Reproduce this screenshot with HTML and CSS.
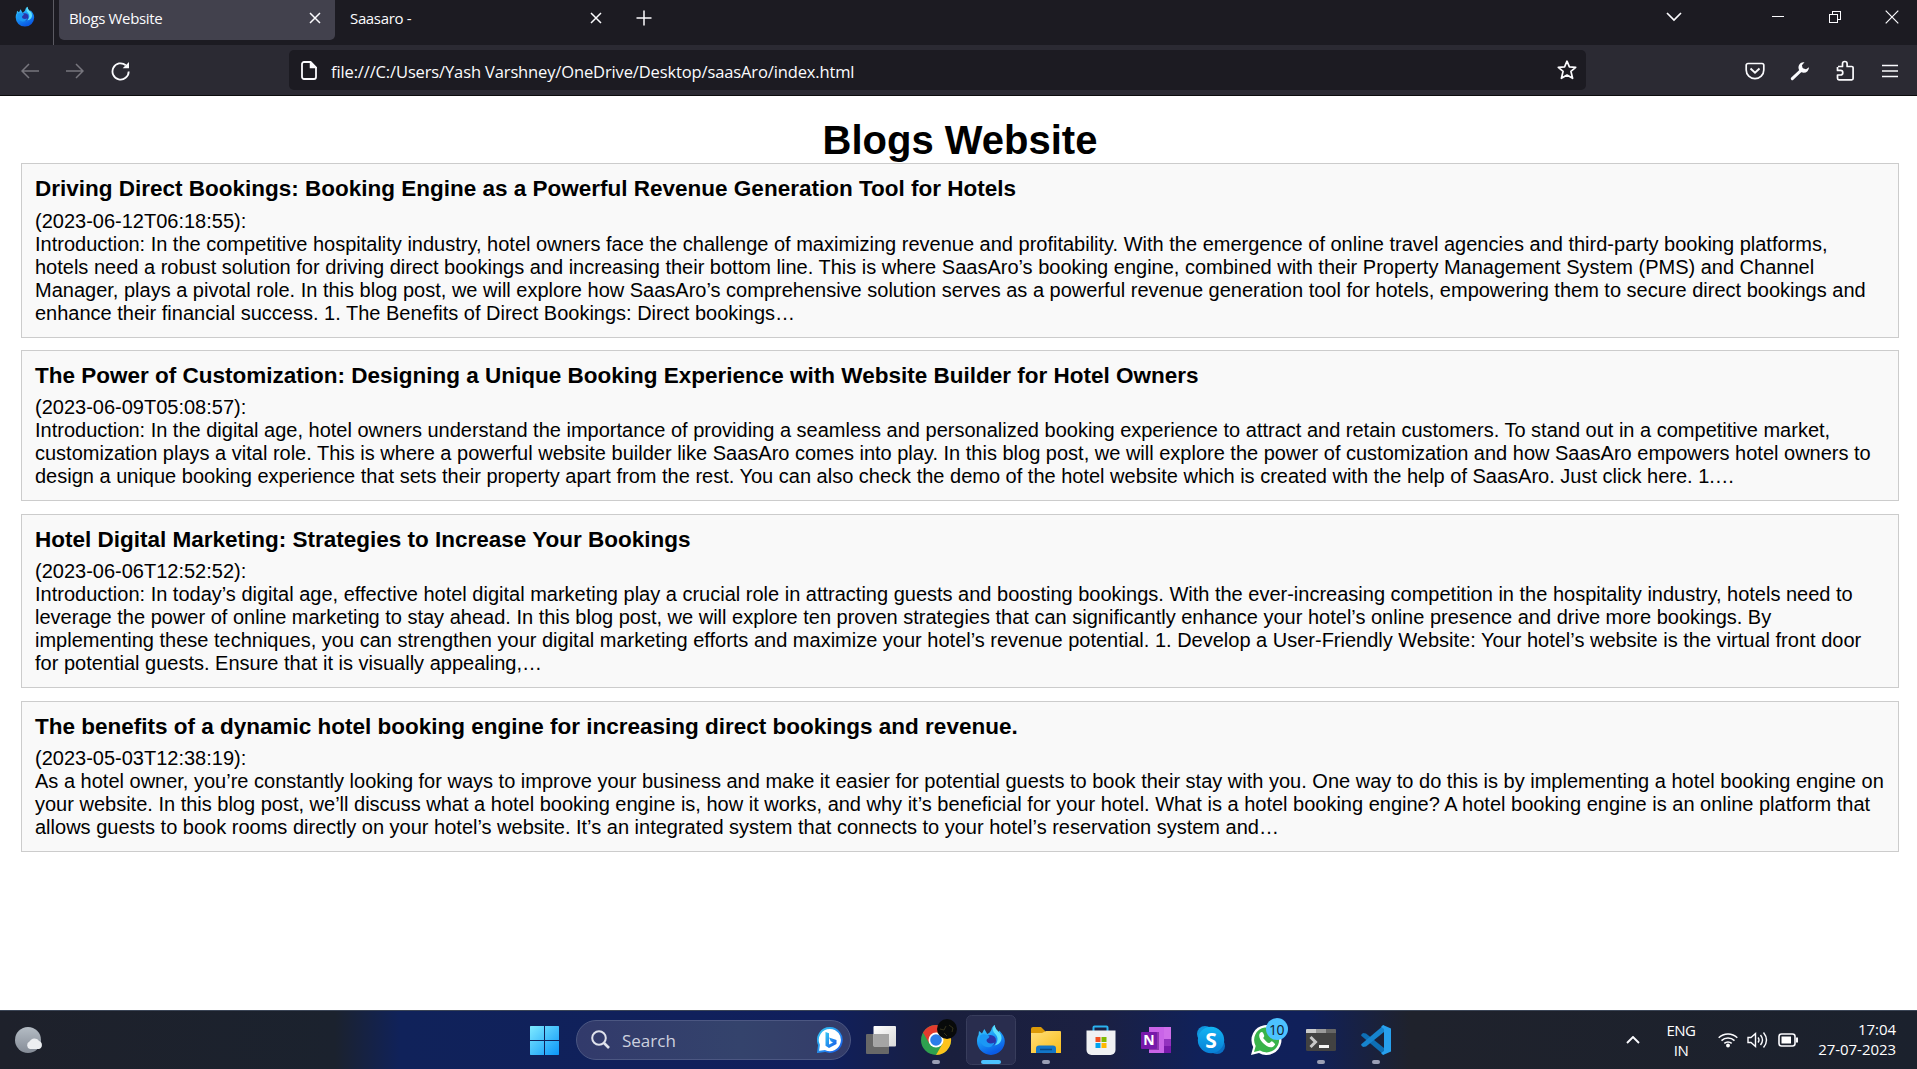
FILE: index.html
```html
<!DOCTYPE html>
<html lang="en">
<head>
<meta charset="utf-8">
<title>Blogs Website</title>
<link rel="stylesheet" href="styles.css">
</head>
<body>
<div class="screen">
  <header class="tabbar">
    <div class="view-btn">
      <svg width="20" height="26" viewBox="10 6 30 39"><use href="#fox"/></svg>
    </div>
    <div class="tab tab-active"><span>Blogs Website</span>
      <svg class="line" width="12" height="12" viewBox="0 0 12 12"><path d="M1 1l10 10M11 1L1 11"/></svg></div>
    <div class="tab"><span>Saasaro -</span>
      <svg class="line" width="12" height="12" viewBox="0 0 12 12"><path d="M1 1l10 10M11 1L1 11"/></svg></div>
    <svg class="line newtab" width="16" height="16" viewBox="0 0 16 16"><path d="M8 .5v15M.5 8h15"/></svg>
    <div class="win">
      <svg class="line" width="16" height="10" viewBox="0 0 16 10"><path d="M1 1l7 7 7-7" stroke-width="1.7"/></svg>
      <svg class="line crisp min" width="12" height="12" viewBox="0 0 12 12"><path d="M0 5.5h12" stroke-width="1"/></svg>
      <svg class="line crisp" width="12" height="12" viewBox="0 0 12 12"><path d="M.5 3.5h8v8h-8zM3.5 3.500v-3h8v8h-3" stroke-width="1"/></svg>
      <svg class="line" width="14" height="14" viewBox="0 0 14 14"><path d="M.7.7l12.600 12.600M13.300.7L.7 13.300" stroke-width="1.200"/></svg>
    </div>
  </header>
  <nav class="toolbar">
    <div class="nav-btns">
      <svg class="line dim" width="18" height="16" viewBox="0 0 18 16"><path d="M18 8H1M8 1L1 8l7 7"/></svg>
      <svg class="line dim" width="18" height="16" viewBox="0 0 18 16"><path d="M0 8h17M10 1l7 7-7 7"/></svg>
      <svg class="line" width="20" height="20" viewBox="0 0 20 20"><path d="M17.700 10.500A8.100 8.100 0 1 1 14.800 4.200" stroke-width="1.800"/><path d="M18 1v6.300h-6.300z" fill="#fbfbfe" stroke="none"/></svg>
    </div>
    <div class="urlbar">
      <svg class="line" width="16" height="19" viewBox="0 0 16 19"><path d="M3 1h6.500L15 6.500V16a2 2 0 0 1-2 2H3a2 2 0 0 1-2-2V3a2 2 0 0 1 2-2z" stroke-width="1.800"/><path d="M9.500 1v5.500H15z" fill="#fbfbfe"/></svg>
      <span class="url">file:///C:/Users/Yash Varshney/OneDrive/Desktop/saasAro/index.html</span>
      <svg class="line" width="20" height="20" viewBox="0 0 20 20"><path d="M10 1.200l2.400 5.600 6.300.5-4.800 4 1.700 7-5.600-3.300-5.600 3.300 1.700-7-4.800-4 6.300-.5z" stroke-width="1.700" stroke-linejoin="round"/></svg>
    </div>
    <div class="actions">
      <svg class="line" width="20" height="18" viewBox="0 0 20 18"><path d="M3 1.500h14a1.800 1.800 0 0 1 1.800 1.800V8A8.800 8.600 0 0 1 1.200 8V3.300A1.800 1.800 0 0 1 3 1.500z" stroke-width="1.700"/><path d="M5.500 6.500L10 10.700l4.500-4.200" stroke-width="1.900"/></svg>
      <svg width="20" height="20" viewBox="0 0 20 20"><path d="M2.300 17.700L12 8.500" stroke="#fbfbfe" stroke-width="3" stroke-linecap="round"/><path d="M14.500 1.200A5.300 5.300 0 1 0 19 6.200l-3 2-3.300-1-.8-3z" fill="#fbfbfe"/></svg>
      <svg class="line" width="20" height="21" viewBox="0 0 20 21"><path d="M3 6.500H7.500V3.800a2.300 2.300 0 0 1 4.600 0v2.700h4.700a1.300 1.300 0 0 1 1.300 1.300V18.500a1.300 1.300 0 0 1-1.300 1.300H4a1.500 1.500 0 0 1-1.500-1.500V15h3a2.200 2.200 0 0 0 0-4.600h-3V7" stroke-width="1.700" stroke-linejoin="round"/></svg>
      <svg class="line" width="16" height="14" viewBox="0 0 16 14"><path d="M0 1.500h16M0 7h16M0 12.500h16" stroke-width="1.500"/></svg>
    </div>
  </nav>

  <main class="page">
    <h1>Blogs Website</h1>
    <article class="card">
      <h3>Driving Direct Bookings: Booking Engine as a Powerful Revenue Generation Tool for Hotels</h3>
      <div>(2023-06-12T06:18:55):</div>
      <p>Introduction: In the competitive hospitality industry, hotel owners face the challenge of maximizing revenue and profitability. With the emergence of online travel agencies and third-party booking platforms, hotels need a robust solution for driving direct bookings and increasing their bottom line. This is where SaasAro’s booking engine, combined with their Property Management System (PMS) and Channel Manager, plays a pivotal role. In this blog post, we will explore how SaasAro’s comprehensive solution serves as a powerful revenue generation tool for hotels, empowering them to secure direct bookings and enhance their financial success. 1. The Benefits of Direct Bookings: Direct bookings…</p>
    </article>
    <article class="card">
      <h3>The Power of Customization: Designing a Unique Booking Experience with Website Builder for Hotel Owners</h3>
      <div>(2023-06-09T05:08:57):</div>
      <p>Introduction: In the digital age, hotel owners understand the importance of providing a seamless and personalized booking experience to attract and retain customers. To stand out in a competitive market, customization plays a vital role. This is where a powerful website builder like SaasAro comes into play. In this blog post, we will explore the power of customization and how SaasAro empowers hotel owners to design a unique booking experience that sets their property apart from the rest. You can also check the demo of the hotel website which is created with the help of SaasAro. Just click here. 1.…</p>
    </article>
    <article class="card">
      <h3>Hotel Digital Marketing: Strategies to Increase Your Bookings</h3>
      <div>(2023-06-06T12:52:52):</div>
      <p>Introduction: In today’s digital age, effective hotel digital marketing play a crucial role in attracting guests and boosting bookings. With the ever-increasing competition in the hospitality industry, hotels need to leverage the power of online marketing to stay ahead. In this blog post, we will explore ten proven strategies that can significantly enhance your hotel’s online presence and drive more bookings. By implementing these techniques, you can strengthen your digital marketing efforts and maximize your hotel’s revenue potential. 1. Develop a User-Friendly Website: Your hotel’s website is the virtual front door for potential guests. Ensure that it is visually appealing,…</p>
    </article>
    <article class="card">
      <h3>The benefits of a dynamic hotel booking engine for increasing direct bookings and revenue.</h3>
      <div>(2023-05-03T12:38:19):</div>
      <p>As a hotel owner, you’re constantly looking for ways to improve your business and make it easier for potential guests to book their stay with you. One way to do this is by implementing a hotel booking engine on your website. In this blog post, we’ll discuss what a hotel booking engine is, how it works, and why it’s beneficial for your hotel. What is a hotel booking engine? A hotel booking engine is an online platform that allows guests to book rooms directly on your hotel’s website. It’s an integrated system that connects to your hotel’s reservation system and…</p>
    </article>
  </main>

  <footer class="taskbar">
    <div class="weather">
      <svg width="30" height="28" viewBox="0 0 30 28"><defs><linearGradient id="moon" x2="0" y2="1"><stop stop-color="#b4bcc4"/><stop offset="1" stop-color="#858c97"/></linearGradient></defs><circle cx="14" cy="14" r="13" fill="url(#moon)"/><path d="M16 23a4 4 0 0 1-.5-7.500 5.500 5.500 0 0 1 9.500-.5A4.200 4.200 0 0 1 25 23z" fill="#eceef1"/></svg>
    </div>
    <div class="apps">
      <svg width="50" height="50" viewBox="0 0 50 50"><defs><linearGradient id="wn" gradientUnits="userSpaceOnUse" x1="11" y1="11" x2="40" y2="40"><stop stop-color="#7eeaff"/><stop offset="1" stop-color="#0b96f8"/></linearGradient></defs><path d="M11.500 11H25v14H11V11.500zM26 11h13.500l.5.5V25H26zM11 26h14v14H11.500l-.5-.5zM26 26h14v13.500l-.5.5H26z" fill="url(#wn)"/></svg>
      <div class="search">
        <svg width="20" height="20" viewBox="0 0 20 20" fill="none" stroke="#dfe2ec"><circle cx="8" cy="8" r="6.800" stroke-width="2"/><path d="M13 13l5 5" stroke-width="2.600"/></svg>
        <span>Search</span>
        <svg width="26" height="26" viewBox="0 0 26 26"><defs><linearGradient id="bg" x2="1" y2="1"><stop stop-color="#35c8f4"/><stop offset="1" stop-color="#1557e8"/></linearGradient></defs><path d="M13 1a12 12 0 1 1-5 23l-7 1 1-7A12 12 0 0 1 13 1z" fill="#fff" stroke="url(#bg)" stroke-width="1.800"/><path d="M8.500 5l3.500 1.200v11.300l4-2-2.300-1.200-1.700-3.800 7.500 2.500v4L12 21l-3.500-2.200z" fill="url(#bg)"/></svg>
      </div>
      <svg width="50" height="50" viewBox="0 0 50 50"><defs><linearGradient id="tg" x2="1" y2="1"><stop stop-color="#fff"/><stop offset="1" stop-color="#d8d8d8"/></linearGradient></defs><rect x="10" y="19" width="23" height="20" rx="1" fill="#686868"/><rect x="17.500" y="11" width="22.500" height="20.500" rx="1" fill="url(#tg)"/><path d="M17.500 19H33v12.500H17.500z" fill="#a5a5a5"/></svg>
      <svg width="50" height="50" viewBox="0 0 50 50" overflow="visible"><circle cx="25" cy="25" r="15" fill="#2ea04f"/><path d="M12 17.500A15 15 0 0 1 38 17.500L25 18l-6.500 10.700z" fill="#e33b2e"/><path d="M38 17.500A15 15 0 0 1 25 40l6.500-11.300L25 17.500z" fill="#fcc31c"/><circle cx="25" cy="25" r="7.500" fill="#fff"/><circle cx="25" cy="25" r="5.800" fill="#2b7de9"/><circle cx="36" cy="14" r="10" fill="#080a0a"/><path d="M29 14l4 1 2-4M33 18l3 3M38 10l4 3-1 4" stroke="#35331c" fill="none"/><rect x="21" y="45" width="8" height="4" rx="2" fill="#9a9fb5"/></svg>
      <svg width="50" height="50" viewBox="0 0 50 50"><defs><linearGradient id="ff" x2=".4" y2="1"><stop stop-color="#4ad8ff"/><stop offset=".5" stop-color="#1b9df7"/><stop offset="1" stop-color="#0a5be6"/></linearGradient></defs><rect x=".5" y=".5" width="49" height="49" rx="5" fill="#292d4e" stroke="#383d5c"/>
        <g id="fox"><path d="M12.500 20l.5-4 3 2.500 2.300-4.500 3 5c2-1 3-2 4-4 .5-2.500 1.700-4 3.400-5 .2 3.500 2 5.500 4 7.500l.6-2c3.500 3.500 5.500 7 5.500 10.500a13.900 13.900 0 0 1-27.800 0c0-2.500.5-4.500 1.500-6z" fill="url(#ff)"/><circle cx="24.500" cy="25.500" r="5.500" fill="#2b35a8"/><path d="M14 20.500c4-2.500 6.500-.5 9.500 1-.5 2-2.500 2-3 3.500 0 3 4 4.500 8 2.500-1 4-5.500 6-9.500 4s-6.500-6.500-5-11z" fill="#1b98f5"/><path d="M28.700 10c-2.700 3.500-2.200 6.500 1 9.500 2.800 3 2.300 8-1.200 11 7-1 9-8 5-13-2.500-2.500-4.500-4-4.800-7.500z" fill="#5fe0fc"/></g>
        <rect x="15" y="45" width="20" height="4" rx="2" fill="#4cc2ff"/></svg>
      <svg width="50" height="50" viewBox="0 0 50 50"><defs><linearGradient id="fd" x2="1" y2="1"><stop stop-color="#ffdf7b"/><stop offset="1" stop-color="#f9bd19"/></linearGradient></defs><path d="M10 14a2 2 0 0 1 2-2h8l4 4v5H10z" fill="#dc9a08"/><path d="M10 18h11l4-2h14a1 1 0 0 1 1 1v21H10z" fill="url(#fd)"/><path d="M15 38v-4.500a3 3 0 0 1 3-3h14a3 3 0 0 1 3 3V38z" fill="#1276c8"/><path d="M19 34.500h12" stroke="#084b87" stroke-width="1.500"/><rect x="21" y="45" width="8" height="4" rx="2" fill="#9a9fb5"/></svg>
      <svg width="50" height="50" viewBox="0 0 50 50"><path d="M17.500 18v-5.500a1 1 0 0 1 1-1h12a1 1 0 0 1 1 1V18" fill="none" stroke="#2bb2ef" stroke-width="2"/><path d="M10.500 15.500h29V35a5 5 0 0 1-5 5h-19a5 5 0 0 1-5-5z" fill="#f0f1f3"/><path d="M19.500 22h5v5h-5z" fill="#f25022"/><path d="M25.500 22h5v5h-5z" fill="#7fba00"/><path d="M19.500 28h5v5h-5z" fill="#00a4ef"/><path d="M25.500 28h5v5h-5z" fill="#ffb900"/></svg>
      <svg width="50" height="50" viewBox="0 0 50 50"><path d="M18 12h22v26H18z" fill="#c964e8"/><path d="M33 12h7v12h-7z" fill="#cf6eea"/><path d="M33 24h7v7h-7z" fill="#9332bf"/><path d="M33 31h7v7h-7z" fill="#7719aa"/><rect x="18" y="17" width="10" height="18" fill="#8d36b0"/><rect x="10" y="17" width="16" height="17" rx="1" fill="#7719aa"/><text x="18" y="30" class="n-mark">N</text></svg>
      <svg width="50" height="50" viewBox="0 0 50 50"><defs><linearGradient id="sk" x2="0" y2="1"><stop stop-color="#12b5f3"/><stop offset="1" stop-color="#087fd6"/></linearGradient></defs><circle cx="19" cy="19" r="8" fill="#1095dd"/><circle cx="31" cy="31" r="8" fill="#0a6fc4"/><circle cx="25" cy="25" r="13.200" fill="url(#sk)"/><text x="25" y="32.500" class="s-mark">S</text></svg>
      <svg width="50" height="50" viewBox="0 0 50 50" overflow="visible"><path d="M10 40l2.200-8A15 15 0 1 1 18 38z" fill="#fff"/><path d="M13 37l1.700-6A12.500 12.500 0 1 1 19 35.500z" fill="#39b34a"/><path d="M19 18c2-2 3-1 4 2s-2 2 0 4 3 4 5 4 2-3 4-1 3 2 1 4c-3 3-8 0-11-3s-5-7-3-10z" fill="#fff"/><circle cx="36" cy="14" r="11" fill="#4cc2ff"/><text x="35.500" y="19.500" class="badge">10</text></svg>
      <svg width="50" height="50" viewBox="0 0 50 50"><rect x="10" y="14" width="30" height="22" rx="1.500" fill="#424242"/><path d="M10 18v-3a1 1 0 0 1 1-1h9v4z" fill="#ccc"/><path d="M20 14h10v4H20z" fill="#999"/><path d="M30 14h9a1 1 0 0 1 1 1v3H30z" fill="#666"/><path d="M14.500 22l5 5-5 5" fill="none" stroke="#c8c8c8" stroke-width="3"/><path d="M23 31.500h10" stroke="#f5f5f5" stroke-width="3"/><rect x="21" y="45" width="8" height="4" rx="2" fill="#9a9fb5"/></svg>
      <svg width="50" height="50" viewBox="0 0 50 50"><path d="M10 20l2-2 3 .5L33 33v7L10.500 21z" fill="#0e6fb5"/><path d="M10 30l2 2 3-.5L33 17v-7L10.500 29z" fill="#1684cf"/><path d="M32 10l8 3.500v23L32 40l-2-2 3-2V14l-3-2z" fill="#27a0ee"/><rect x="21" y="45" width="8" height="4" rx="2" fill="#9a9fb5"/></svg>
    </div>
    <div class="tray">
      <svg class="line" width="14" height="8" viewBox="0 0 14 8"><path d="M1 7l6-6 6 6" stroke-width="1.900"/></svg>
      <div class="lang">ENG<br>IN</div>
      <svg class="line wifi" width="20" height="16" viewBox="0 0 20 16"><path d="M.7 5.800a13 13 0 0 1 18.600 0M3.500 8.600a9.200 9.200 0 0 1 13 0M6.300 11.400a5.300 5.300 0 0 1 7.400 0" stroke-width="1.500"/><circle cx="10" cy="13.500" r="1.900" fill="#fff" stroke="none"/></svg>
      <svg class="line" width="21" height="18" viewBox="0 0 21 18"><path d="M1 6.500h3l4.500-4v13L4 11.500H1zM11 6.500q2 2.500 0 5M13.500 4q4 5 0 10M16.500 1.500q6 7.500 0 15" stroke-width="1.400"/></svg>
      <svg class="line battery" width="21" height="14" viewBox="0 0 21 14"><rect x="1" y="1" width="16" height="12" rx="2.500" stroke-width="1.600"/><rect x="3.500" y="3.500" width="9.500" height="7" fill="#fff" stroke="none"/><path d="M19 4.500v5" stroke-width="2"/></svg>
      <div class="clock">17:04<br>27-07-2023</div>
    </div>
  </footer>
</div>
</body>
</html>
```
FILE: styles.css
```css
* { box-sizing: border-box; }
body { margin: 0; overflow: hidden; background: #fff; }
svg { display: block; flex: none; }
.screen { height: 1069px; display: flex; flex-direction: column; font-family: "Open Sans", "Noto Sans", sans-serif; }
.line { fill: none; stroke: #fbfbfe; stroke-width: 1.5; }
.crisp { shape-rendering: crispEdges; }
.dim { stroke: #77767e; }

.tabbar { flex: none; height: 45px; background: #1c1b22; display: flex; color: #fbfbfe; font-size: 15px; letter-spacing: -.35px; }
.view-btn { width: 54px; border-right: 1px solid #5b5a62; padding: 4px 0 0 15px; }
.tab { width: 276px; height: 40px; margin-left: 5px; padding: 0 14px 4px 10px; display: flex; align-items: center; justify-content: space-between; }
.tab + .tab { margin-left: 5px; }
.tab-active { background: #42414d; border-radius: 0 0 5px 5px; }
.newtab { margin: 10px 0 0 20px; }
.win { margin-left: auto; height: 34px; padding-right: 18px; display: flex; align-items: center; }
.win .min { margin: 0 45px 0 90px; }
.win svg:last-child { margin-left: 44px; }

.toolbar { flex: none; height: 51px; background: #2b2a33; border-bottom: 1px solid #0c0c0d; display: flex; align-items: flex-start; padding-top: 5px; }
.nav-btns { width: 289px; height: 41px; padding-left: 21px; display: flex; align-items: center; gap: 27px; }
.urlbar { width: 1297px; height: 40px; border-radius: 5px; background: #1c1b22; display: flex; align-items: center; padding: 0 9px 0 12px; }
.url { flex: 1; padding: 3px 0 0 14px; color: #fbfbfe; font-size: 16.500px; letter-spacing: -.130px; white-space: nowrap; }
.actions { flex: 1; height: 41px; padding-right: 19px; display: flex; align-items: center; justify-content: flex-end; gap: 25px; }
.actions svg:last-child { margin-left: 2px; }

.page { flex: 1; min-height: 0; padding: 21px 18px 0 21px; font-family: "Liberation Sans", Arial, sans-serif; font-size: 20px; line-height: 23px; color: #000; }
h1 { margin: 0; height: 46px; font-size: 40px; line-height: 46px; text-align: center; }
.card { border: 1px solid #ccc; background: #f9f9f9; padding: 12px 12px 12px 13px; margin-bottom: 13px; }
h3 { margin: 0 0 8px; font-size: 22.500px; line-height: 25px; white-space: nowrap; }
p { margin: 0; }
.card:first-of-type { margin-bottom: 12px; }
.card:first-of-type h3 { margin-bottom: 9px; }

.taskbar { flex: none; height: 59px; border-top: 1px solid #3b4556; display: flex; justify-content: space-between; color: #fff;
  background: linear-gradient(90deg, #1e212b 0, #1b222e 335px, #10225a 400px, #101f5c 830px, #1a1f3d 950px, #1b2042 1100px, #10215a 1200px, #10205a 1310px, #1f222c 1410px, #1b212d 1917px); }
.weather { width: 519px; padding: 15px 0 0 14px; }
.apps { display: flex; gap: 5px; padding-top: 4px; }
.search { width: 275px; height: 40px; margin: 5px 0 0 2px; border: 1px solid #4c5782; border-radius: 20px; background: linear-gradient(90deg, #323a6b, #34436c 60%, #343c69); display: flex; align-items: center; padding: 0 7px 0 14px; color: #cdd1df; font-size: 17px; }
.search span { flex: 1; padding-left: 11px; }
.n-mark, .s-mark { fill: #fff; font: bold 14px "Open Sans", sans-serif; text-anchor: middle; }
.s-mark { font-size: 21px; }
.badge { fill: #10202c; font-size: 14px; text-anchor: middle; letter-spacing: -.5px; }
.tray { margin-left: auto; display: flex; align-items: center; padding-right: 21px; font-size: 15px; line-height: 20px; }
.lang { width: 30px; margin: 0 22px 0 26px; text-align: center; letter-spacing: -.5px; }
.wifi { margin-right: 9px; }
.battery { margin-left: 10px; }
.clock { width: 97px; text-align: right; white-space: nowrap; letter-spacing: -.050px; position: relative; top: -1px; }
```
